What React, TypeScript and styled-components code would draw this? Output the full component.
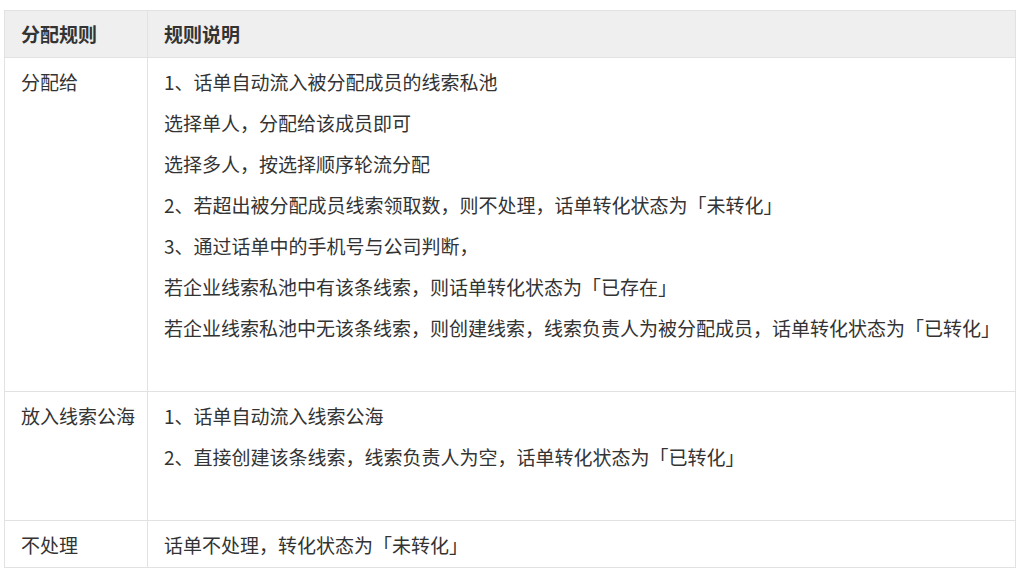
import styled, { createGlobalStyle } from 'styled-components';

interface IRule {
  name: string;
  lines: string[];
  trailingBlank?: boolean;
}

const rules: IRule[] = [
  {
    name: '分配给',
    lines: [
      '1、话单自动流入被分配成员的线索私池',
      '选择单人，分配给该成员即可',
      '选择多人，按选择顺序轮流分配',
      '2、若超出被分配成员线索领取数，则不处理，话单转化状态为「未转化」',
      '3、通过话单中的手机号与公司判断，',
      '若企业线索私池中有该条线索，则话单转化状态为「已存在」',
      '若企业线索私池中无该条线索，则创建线索，线索负责人为被分配成员，话单转化状态为「已转化」',
    ],
    trailingBlank: true,
  },
  {
    name: '放入线索公海',
    lines: ['1、话单自动流入线索公海', '2、直接创建该条线索，线索负责人为空，话单转化状态为「已转化」'],
    trailingBlank: true,
  },
  {
    name: '不处理',
    lines: ['话单不处理，转化状态为「未转化」'],
  },
];

export default function App() {
  return (
    <>
      <GlobalStyle />
      <S.Page>
        <S.Table>
          <colgroup>
            <col className="rule-table__name-col" />
            <col />
          </colgroup>
          <thead>
            <tr>
              <S.HeadCell>分配规则</S.HeadCell>
              <S.HeadCell>规则说明</S.HeadCell>
            </tr>
          </thead>
          <tbody>
            {rules.map((rule) => (
              <tr key={rule.name}>
                <S.Cell>{rule.name}</S.Cell>
                <S.Cell>
                  {rule.lines.map((line) => (
                    <S.Line key={line}>{line}</S.Line>
                  ))}
                  {rule.trailingBlank && <S.Line />}
                </S.Cell>
              </tr>
            ))}
          </tbody>
        </S.Table>
      </S.Page>
    </>
  );
}

const GlobalStyle = createGlobalStyle`
  body {
    margin: 0;
    background: #fff;
    font-family: "Noto Sans CJK SC", "Noto Sans", sans-serif;
    color: #333;
  }
`;

const S = {
  Page: styled.div`
    padding: 10px 8px 0 4px;
  `,
  Table: styled.table`
    width: 1012px;
    table-layout: fixed;
    border-collapse: collapse;
    font-size: 19px;
    .rule-table__name-col {
      width: 143px;
    }
  `,
  HeadCell: styled.th`
    background: #efefef;
    border: 1px solid #e2e2e2;
    height: 46px;
    padding: 0 16px;
    text-align: left;
    font-weight: 700;
    line-height: 24px;
    vertical-align: middle;
    white-space: nowrap;
  `,
  Cell: styled.td`
    border: 1px solid #e2e2e2;
    padding: 12px 16px 10px;
    vertical-align: top;
    line-height: 24px;
    white-space: nowrap;
  `,
  Line: styled.p`
    margin: 0 0 17px;
    height: 24px;
    &:last-child {
      margin-bottom: 0;
    }
  `,
};
